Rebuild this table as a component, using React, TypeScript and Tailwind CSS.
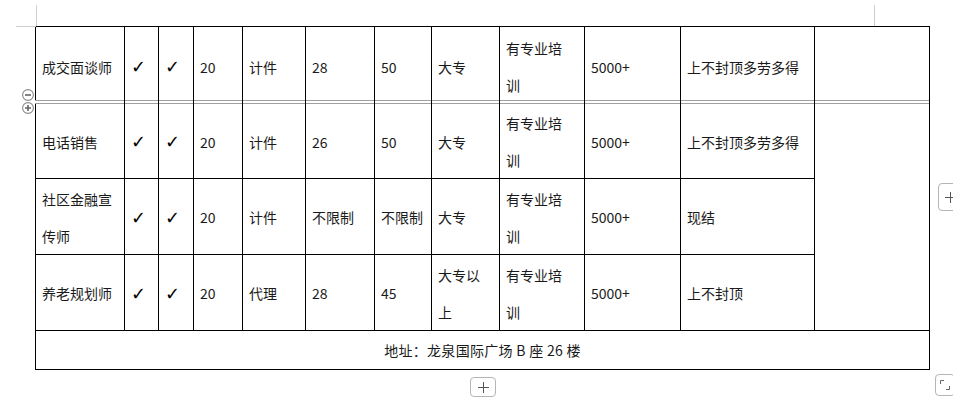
import React from "react";

const cols = "grid-cols-[89px_34px_35px_49px_63px_69px_57px_68px_85px_96px_134px_115px]";

type Row = (string | string[])[];

const Cell = ({ v, extra = "" }: { v: string | string[]; extra?: string }) => (
  <div className={`flex items-center border-r border-black px-[6px] ${extra}`}>
    <div className="leading-[37px] whitespace-nowrap">
      {Array.isArray(v) ? (
        v.map((t, i) => <div key={i}>{t}</div>)
      ) : v === "✓" ? (
        <span className="text-[18px] text-black" style={{ fontFamily: '"DejaVu Sans", sans-serif' }}>
          ✓
        </span>
      ) : (
        v
      )}
    </div>
  </div>
);

const row1: Row = ["成交面谈师", "✓", "✓", "20", "计件", "28", "50", "大专", ["有专业培", "训"], "5000+", "上不封顶多劳多得", ""];
const rows2: Row[] = [
  ["电话销售", "✓", "✓", "20", "计件", "26", "50", "大专", ["有专业培", "训"], "5000+", "上不封顶多劳多得"],
  [["社区金融宣", "传师"], "✓", "✓", "20", "计件", "不限制", "不限制", "大专", ["有专业培", "训"], "5000+", "现结"],
  ["养老规划师", "✓", "✓", "20", "代理", "28", "45", ["大专以", "上"], ["有专业培", "训"], "5000+", "上不封顶"],
];
const rowH = ["h-[75px]", "h-[76px]", "h-[76px]"];

const Plus = () => (
  <svg width="11" height="11" viewBox="0 0 11 11">
    <path d="M0 5.5H11M5.5 0V11" stroke="#555" strokeWidth="1" />
  </svg>
);

export default function App() {
  return (
    <div
      className="relative w-[953px] h-[405px] bg-white text-[14px] text-[#1a1a1a] overflow-hidden"
      style={{ fontFamily: '"Noto Sans CJK SC", "DejaVu Sans", sans-serif' }}
    >
      {/* corner marks */}
      <div className="absolute left-[36px] top-[5px] w-px h-[21px] bg-[#cfcfcf]" />
      <div className="absolute left-[16px] top-[26px] w-[20px] h-px bg-[#cfcfcf]" />
      <div className="absolute left-[874px] top-[5px] w-px h-[21px] bg-[#cfcfcf]" />

      {/* row collapse / expand icons */}
      <div className="absolute left-[22px] top-[89px] flex flex-col gap-[1px]">
        <svg width="12" height="12" viewBox="0 0 12 12">
          <circle cx="6" cy="6" r="5.4" fill="white" stroke="#8a8a8a" strokeWidth="1.1" />
          <path d="M3 6H9" stroke="#666" strokeWidth="1.6" />
        </svg>
        <svg width="12" height="12" viewBox="0 0 12 12">
          <circle cx="6" cy="6" r="5.4" fill="white" stroke="#8a8a8a" strokeWidth="1.1" />
          <path d="M3 6H9M6 3V9" stroke="#666" strokeWidth="1.6" />
        </svg>
      </div>

      <div className="pt-[26px] pl-[35px]">
        {/* table 1 */}
        <div className="w-[895px] border-l border-t border-black">
          <div className={`grid ${cols} h-[73px]`}>
            {row1.map((v, i) => (
              <Cell key={i} v={v} extra="pt-[3px]" />
            ))}
          </div>
        </div>
        <div className="w-[895px] h-px bg-[#a0a0a0]" />
        <div className="h-[2px]" />
        <div className="w-[895px] h-px bg-[#a0a0a0]" />
        {/* table 2 */}
        <div className="w-[895px] border-l border-black">
          <div className={`grid ${cols}`}>
            {rows2.map((r, ri) =>
              r.map((v, i) => (
                <Cell key={`${ri}-${i}`} v={v} extra={`border-b ${rowH[ri]} pt-[2px]`} />
              ))
            )}
            <div className="col-start-12 row-start-1 row-span-3 border-r border-b border-black" />
          </div>
          <div className="h-[39px] border-r border-b border-black flex items-center justify-center tracking-[0.3px]">
            地址：龙泉国际广场&nbsp;B&nbsp;座&nbsp;26&nbsp;楼
          </div>
        </div>
      </div>

      {/* right add-column button */}
      <div className="absolute left-[938px] top-[183px] w-[24px] h-[28px] rounded-[4px] border border-[#b5b5b5] bg-white flex items-center pl-[6px]">
        <Plus />
      </div>

      {/* bottom add-row button */}
      <div className="absolute left-[470px] top-[377px] w-[26px] h-[20px] rounded-[4px] border border-[#b5b5b5] bg-white flex items-center justify-center">
        <Plus />
      </div>

      {/* resize handle */}
      <div className="absolute left-[935px] top-[374px] w-[20px] h-[22px] rounded-[4px] border border-[#b5b5b5] bg-white flex items-center justify-center">
        <svg width="10" height="10" viewBox="0 0 10 10">
          <path d="M0.5 4V0.5H4M9.5 6V9.5H6" stroke="#666" strokeWidth="1" fill="none" />
        </svg>
      </div>
    </div>
  );
}
